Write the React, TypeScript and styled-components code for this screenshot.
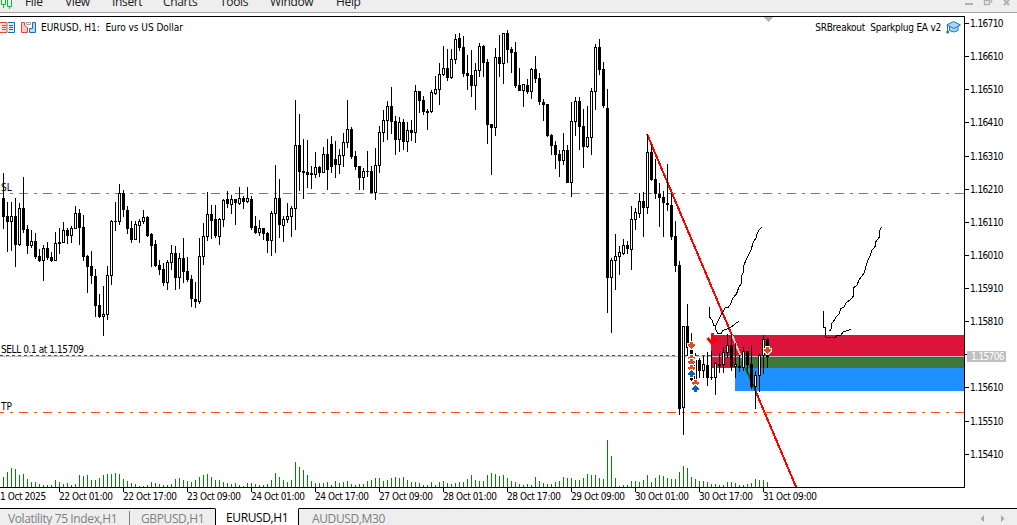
import React from "react";
import styled, { createGlobalStyle, css } from "styled-components";

// Chart geometry
const PLOT_TOP = 17;
const PLOT_WIDTH = 964;
const PLOT_HEIGHT = 470;
const BAR_STEP = 4;
const FIRST_BAR = 3;

// [high, body top, body bottom, low, bullish]
const candles = [
  [173, 198, 217, 229, 0], [202, 216, 222, 252, 0], [202, 216, 222, 251, 1], [198, 216, 245, 267, 0],
  [203, 208, 245, 246, 1], [177, 208, 230, 233, 0], [225, 229, 246, 254, 0], [230, 241, 246, 248, 1],
  [233, 241, 257, 259, 0], [249, 256, 261, 262, 0], [245, 248, 261, 281, 1], [242, 248, 258, 260, 0],
  [252, 257, 261, 262, 0], [232, 243, 261, 261, 1], [228, 242, 244, 254, 0], [222, 230, 243, 243, 1],
  [228, 230, 236, 244, 0], [226, 228, 236, 243, 1], [206, 213, 229, 229, 1], [209, 213, 228, 245, 0],
  [215, 227, 257, 261, 0], [255, 256, 267, 293, 0], [251, 266, 276, 284, 0], [269, 276, 306, 317, 0],
  [294, 305, 317, 318, 0], [286, 314, 317, 336, 1], [266, 275, 315, 320, 1], [220, 221, 276, 285, 1],
  [202, 221, 222, 231, 0], [184, 193, 222, 225, 1], [190, 193, 210, 217, 0], [206, 210, 229, 234, 0],
  [221, 228, 240, 243, 0], [221, 224, 240, 240, 1], [219, 221, 226, 243, 1], [210, 217, 222, 224, 1],
  [216, 217, 236, 237, 0], [233, 234, 246, 267, 0], [240, 244, 266, 267, 0], [260, 265, 270, 275, 0],
  [263, 269, 283, 286, 0], [260, 262, 283, 290, 1], [245, 253, 263, 270, 1], [246, 253, 278, 290, 0],
  [253, 258, 278, 289, 1], [238, 258, 272, 283, 0], [257, 271, 280, 282, 0], [275, 279, 299, 307, 0],
  [282, 299, 302, 308, 0], [238, 256, 302, 304, 1], [223, 236, 257, 265, 1], [192, 214, 237, 241, 1],
  [205, 214, 221, 239, 0], [205, 219, 236, 238, 0], [218, 219, 237, 245, 1], [199, 200, 220, 227, 1],
  [191, 199, 204, 208, 0], [195, 199, 205, 214, 1], [199, 199, 203, 225, 0], [187, 198, 204, 205, 1],
  [196, 198, 202, 209, 0], [187, 198, 202, 203, 1], [196, 199, 228, 230, 0], [216, 226, 233, 234, 0],
  [220, 228, 233, 236, 1], [228, 228, 234, 240, 0], [232, 233, 241, 253, 0], [211, 213, 241, 256, 1],
  [165, 198, 214, 253, 1], [179, 198, 225, 238, 0], [216, 219, 226, 242, 1], [203, 216, 220, 223, 1],
  [206, 208, 217, 237, 1], [100, 145, 209, 230, 1], [114, 145, 172, 191, 0], [139, 171, 173, 199, 0],
  [140, 172, 175, 188, 0], [166, 173, 175, 189, 0], [152, 167, 175, 178, 1], [166, 167, 173, 177, 0],
  [147, 154, 173, 173, 1], [139, 154, 170, 190, 0], [136, 144, 167, 173, 0], [141, 159, 165, 178, 0],
  [149, 155, 165, 174, 1], [133, 142, 156, 167, 1], [100, 129, 143, 148, 1], [127, 129, 157, 159, 0],
  [151, 156, 167, 170, 0], [166, 166, 178, 190, 0], [168, 171, 178, 190, 1], [151, 171, 172, 177, 0],
  [166, 171, 193, 193, 0], [148, 165, 193, 200, 1], [126, 132, 166, 173, 1], [110, 120, 133, 142, 1],
  [101, 106, 121, 140, 1], [87, 106, 122, 134, 0], [116, 121, 140, 155, 0], [117, 122, 140, 152, 1],
  [119, 122, 142, 150, 0], [122, 130, 142, 152, 1], [120, 130, 133, 141, 0], [85, 91, 133, 143, 1],
  [91, 91, 101, 113, 0], [96, 100, 112, 115, 0], [109, 111, 113, 130, 0], [90, 92, 112, 113, 1],
  [76, 89, 94, 95, 1], [63, 74, 90, 105, 1], [46, 68, 75, 76, 1], [49, 68, 78, 81, 0],
  [49, 59, 78, 79, 1], [34, 39, 60, 64, 1], [33, 38, 48, 51, 0], [36, 47, 74, 77, 0],
  [55, 73, 76, 90, 0], [50, 75, 86, 97, 0], [63, 70, 86, 110, 1], [43, 46, 71, 77, 1],
  [45, 46, 63, 77, 0], [59, 62, 125, 144, 0], [124, 124, 128, 175, 0], [48, 57, 128, 136, 1],
  [35, 57, 64, 77, 0], [33, 33, 64, 84, 1], [30, 33, 50, 63, 0], [47, 49, 53, 73, 0],
  [42, 52, 86, 88, 0], [68, 85, 91, 91, 0], [84, 84, 91, 107, 1], [79, 85, 92, 94, 0],
  [68, 69, 92, 99, 1], [56, 69, 79, 83, 0], [73, 78, 102, 105, 0], [99, 102, 105, 121, 0],
  [104, 104, 136, 137, 0], [134, 135, 146, 155, 0], [141, 145, 155, 169, 0], [150, 154, 161, 177, 0],
  [133, 150, 161, 165, 1], [145, 150, 183, 183, 0], [102, 121, 183, 197, 1], [97, 101, 122, 136, 1],
  [97, 101, 127, 150, 0], [109, 126, 147, 168, 0], [106, 137, 147, 148, 1], [88, 91, 138, 155, 1],
  [44, 47, 92, 110, 1], [39, 47, 70, 75, 0], [62, 69, 106, 108, 0], [89, 108, 278, 313, 0],
  [258, 260, 278, 333, 1], [234, 256, 261, 290, 1], [246, 252, 257, 275, 1], [239, 245, 254, 255, 1],
  [241, 245, 249, 254, 0], [206, 219, 250, 270, 1], [208, 212, 220, 230, 1], [193, 201, 214, 218, 1],
  [192, 201, 208, 237, 0], [134, 152, 208, 214, 1], [145, 152, 180, 181, 0], [159, 179, 194, 199, 0],
  [183, 194, 198, 227, 0], [191, 197, 203, 237, 0], [164, 203, 205, 211, 0], [193, 205, 237, 240, 0],
  [221, 236, 266, 272, 0], [261, 265, 409, 415, 0], [326, 326, 408, 435, 1], [304, 326, 348, 357, 0],
  [333, 346, 380, 382, 0], [353, 360, 380, 393, 1], [358, 360, 371, 378, 0], [356, 364, 371, 378, 1],
  [352, 365, 378, 386, 0], [351, 377, 378, 380, 0], [362, 363, 378, 395, 1], [353, 364, 366, 373, 0],
  [347, 352, 365, 373, 1], [334, 345, 353, 358, 1], [334, 345, 367, 371, 0], [343, 364, 367, 378, 1],
  [355, 366, 368, 372, 0], [347, 351, 368, 371, 1], [351, 351, 365, 374, 0], [346, 364, 387, 389, 0],
  [371, 375, 387, 409, 1], [353, 355, 376, 392, 1], [335, 339, 356, 374, 1], [338, 339, 357, 368, 0],
];

const volumes = [
  10, 15, 19, 18, 12, 13, 8, 5, 5, 3, 2, 2, 2, 7, 5, 3, 4, 2, 3, 12, 11, 12, 7, 7, 9, 12, 13, 13, 14, 13, 8, 6,
  4, 3, 1, 1, 2, 5, 4, 3, 2, 2, 3, 8, 9, 7, 6, 5, 7, 10, 12, 13, 10, 7, 7, 5, 4, 3, 4, 2, 1, 4, 4, 3,
  2, 2, 3, 7, 14, 10, 7, 5, 7, 25, 20, 17, 12, 6, 4, 4, 4, 5, 2, 6, 4, 5, 6, 3, 2, 3, 3, 6, 7, 9, 9, 6,
  7, 9, 10, 9, 10, 7, 5, 5, 4, 2, 2, 5, 2, 5, 6, 4, 3, 4, 5, 5, 8, 12, 7, 6, 6, 12, 14, 13, 11, 12, 9, 6,
  5, 3, 2, 3, 2, 10, 6, 4, 3, 3, 5, 6, 10, 9, 9, 7, 7, 9, 13, 12, 12, 9, 8, 47, 31, 9, 1, 2, 2, 6, 6, 5,
  7, 12, 5, 9, 12, 11, 9, 8, 8, 15, 21, 19, 10, 8, 6, 6, 5, 3, 3, 2, 2, 5, 5, 4, 2, 2, 3, 4, 8, 7, 7, 5,
];

const prices = [
  "1.16710", "1.16610", "1.16510", "1.16410", "1.16310", "1.16210", "1.16110",
  "1.16010", "1.15910", "1.15810", "", "1.15610", "1.15510", "1.15410",
];

const times = [
  "22 Oct 01:00", "22 Oct 17:00", "23 Oct 09:00", "24 Oct 01:00", "24 Oct 17:00", "27 Oct 09:00",
  "28 Oct 01:00", "28 Oct 17:00", "29 Oct 09:00", "30 Oct 01:00", "30 Oct 17:00", "31 Oct 09:00",
];

const menu = [
  { label: "File", width: 40 },
  { label: "View", width: 47 },
  { label: "Insert", width: 51 },
  { label: "Charts", width: 57 },
  { label: "Tools", width: 50 },
  { label: "Window", width: 66 },
  { label: "Help", width: 40 },
];

const trades = [
  { x: 691, y: 345, side: "sell" },
  { x: 691, y: 358, side: "sell" },
  { x: 691, y: 362, side: "sell" },
  { x: 691, y: 368, side: "sell" },
  { x: 691, y: 373, side: "buy" },
  { x: 695, y: 383, side: "sell" },
  { x: 695, y: 388, side: "buy" },
  { x: 767, y: 350, side: "sell" },
];

const GlobalStyle = createGlobalStyle`
  body {
    margin: 0;
    background: #fff;
    overflow: hidden;
  }
`;

const chartFont = css`
  font-family: "DejaVu Sans Condensed", "DejaVu Sans", sans-serif;
  font-size: 10px;
  color: #000;
  white-space: pre;
`;

const Terminal = styled.div`
  width: 1017px;
  height: 525px;
  display: flex;
  flex-direction: column;
  overflow: hidden;
  background: #fff;
`;

const MenuBar = styled.div`
  height: 12px;
  flex: none;
  display: flex;
  align-items: flex-end;
  justify-content: space-between;
  background: #eeeeee;
  border-bottom: 1px solid #a0a0a0;
  overflow: hidden;
`;

const MenuItems = styled.div`
  display: flex;
  align-items: flex-end;
  height: 12px;
`;

const MenuIcon = styled.svg`
  width: 25px;
  height: 12px;
`;

const MenuItem = styled.span<{ $width: number }>`
  width: ${(p) => p.$width}px;
  font: 12px/16px "Open Sans", "Noto Sans", sans-serif;
  letter-spacing: -0.35px;
  color: #1a1a1a;
  padding-bottom: 2px;
`;

const WindowControls = styled.svg`
  width: 53px;
  height: 12px;
`;

const ChartWindow = styled.div`
  display: flex;
  flex: none;
  height: 471px;
  margin-top: 3px;
`;

const PlotArea = styled.div`
  position: relative;
  width: 964px;
  flex: none;
  border-top: 1px solid #000;
  border-right: 1px solid #000;
`;

const Plot = styled.svg`
  display: block;

  text {
    ${chartFont}
  }
`;

const ChartHeader = styled.div`
  position: absolute;
  top: 3px;
  left: 0;
  right: 3px;
  height: 14px;
  display: flex;
  align-items: center;
  ${chartFont}
`;

const HeaderIcon = styled.svg<{ $gap: number }>`
  width: 15px;
  height: 14px;
  margin-right: ${(p) => p.$gap}px;
`;

const Title = styled.span`
  letter-spacing: -0.02px;
`;

const ExpertName = styled.span`
  margin-left: auto;
  margin-right: 5px;
  letter-spacing: -0.23px;
`;

const PriceAxis = styled.div`
  position: relative;
  flex: 1;
  display: flex;
  flex-direction: column;
`;

const PriceTick = styled.div`
  height: 33.13px;
  flex: none;
  display: flex;
  align-items: flex-start;
  ${chartFont}
  line-height: 15px;
  letter-spacing: -0.6px;

  &::before {
    content: "";
    width: 4px;
    height: 1px;
    margin: 7px 1px 0 0;
    background: #000;
  }
`;

const CurrentPrice = styled.div`
  position: absolute;
  left: 2px;
  top: 335px;
  width: 35px;
  height: 11px;
  padding-left: 4px;
  background: #c0c0c0;
  ${chartFont}
  color: #fff;
  line-height: 11px;
  letter-spacing: -0.6px;
`;

const TimeAxis = styled.div`
  flex: none;
  height: 20px;
  display: flex;
  width: 965px;
  border-top: 1px solid #000;
`;

const TimeTick = styled.div<{ $first?: boolean }>`
  width: ${(p) => (p.$first ? 59 : 64)}px;
  flex: none;
  ${chartFont}
  line-height: 10px;
  letter-spacing: ${(p) => (p.$first ? -0.42 : -0.42)}px;

  &::before {
    content: "";
    display: block;
    width: 1px;
    height: 4px;
    background: ${(p) => (p.$first ? "transparent" : "#000")};
  }
`;

const TabBar = styled.div`
  flex: 1;
  display: flex;
  background: #eeeeee;
`;

const Tab = styled.div<{ $width: number; $active?: boolean; $divider?: boolean }>`
  width: ${(p) => p.$width}px;
  flex: none;
  box-sizing: border-box;
  overflow: hidden;
  white-space: nowrap;
  font: 12px/19px "Open Sans", "Noto Sans", sans-serif;
  letter-spacing: -0.38px;
  color: #808080;
  border-top: 1px solid #000;
  padding-left: ${(p) => (p.$width === 85 ? 11 : 13)}px;

  ${(p) =>
    p.$divider &&
    css`
      padding-left: 8px;
      background: linear-gradient(#808080, #808080) right 2px / 1px 14px no-repeat;
    `}

  ${(p) =>
    p.$active &&
    css`
      color: #000;
      background: #fff;
      border-top-color: #fff;
      border-left: 1px solid #000;
      border-right: 1px solid #000;
      padding-left: 10px;
      line-height: 17px;
    `}
`;

const TabFill = styled.div`
  flex: 1;
  display: flex;
  justify-content: flex-end;
  border-top: 1px solid #000;
`;

function Candle({ index, data }: { index: number; data: number[] }) {
  const x = FIRST_BAR + index * BAR_STEP;
  const [high, top, bottom, low, up] = data;
  return (
    <g>
      <rect x={x} y={high} width={1} height={low - high} />
      <rect x={x - 1} y={top} width={3} height={bottom - top} />
      {up === 1 && <rect x={x} y={top + 1} width={1} height={Math.max(bottom - top - 2, 0)} fill="#fff" />}
    </g>
  );
}

function TradeMark({ x, y, side }: { x: number; y: number; side: string }) {
  const flip = side === "buy" ? -1 : 1;
  return (
    <path
      transform={`translate(${x + 0.5} ${y + 0.5}) scale(1 ${flip})`}
      d="M-1.5 -3.5H1.5V-1.5H3.5V0.5H2.5V1.5H1.5V2.5H0.5V3.5H-0.5V2.5H-1.5V1.5H-2.5V0.5H-3.5V-1.5H-1.5Z"
      fill={side === "buy" ? "#0a62b0" : "#e84a1c"}
      stroke="#fff"
      strokeWidth={1.6}
      paintOrder="stroke"
    />
  );
}

function PriceChart() {
  return (
    <Plot
      width={PLOT_WIDTH}
      height={PLOT_HEIGHT}
      viewBox={`0 ${PLOT_TOP} ${PLOT_WIDTH} ${PLOT_HEIGHT}`}
      shapeRendering="crispEdges"
    >
      {/* Supply and demand zones */}
      <rect x={711} y={335} width={253} height={33} fill="#dc143c" />
      <rect x={735} y={358} width={229} height={33} fill="#1e90ff" />
      <rect x={735} y={358} width={229} height={10} fill="#3c783c" />

      {/* Trend line */}
      <g strokeWidth={2} fill="none">
        <path d="M647 134L796.5 488" stroke="#ff0000" />
        <path d="M732 335L741.5 358" stroke="#dccfae" />
        <path d="M741.5 358L745.5 368" stroke="#2c86d8" />
        <path d="M745.5 368L755.5 391" stroke="#0f6b14" />
      </g>

      {/* Stop loss, take profit and entry */}
      <g fill="none" stroke="#ff4f14" strokeDasharray="9 6 3 6">
        <path d="M-5 193.5H964" />
        <path d="M-5 412.5H964" />
      </g>
      <path d="M0 356.5H964" stroke="#c0c0c0" />
      <path d="M0 355.5H964" stroke="#108010" strokeDasharray="3 3" />

      {volumes.map((v, i) => (
        <rect key={i} x={FIRST_BAR + i * BAR_STEP} y={487 - v} width={1} height={v} fill="#008a00" />
      ))}
      {candles.map((c, i) => (
        <Candle key={i} index={i} data={c} />
      ))}

      {/* Freehand arrows */}
      <g fill="none" stroke="#000">
        <path d="M761.5 227.5L759 230L757 234L756 238L753 243L751 250L749 254L746 260L744 265L743 273L741.5 276V283L738.5 288L736.5 294L733 298L730.5 304L728 307.5H725.5L723 312L720 317L718 321L715.5 326" />
        <path d="M709.5 307V317L712 320L713.5 325H715.5V329L718 333.5H721.5L722.5 330.5L727 329L730 327.5L734 325L736 323L739.5 321.5" />
        <path d="M881.5 227.5L879.5 231V237L875.5 242V246L872 250L870.5 255L868 260L866 266L864.5 272L862 276L859 280L857 285L853.5 288V296L851 299L846 303L844 307L840.5 309L839 314L836 317L834.5 320L831.5 324V328L829.5 331.5" />
        <path d="M823.5 311V327.5H825.5V337.5H835.5L836.5 335.5H840.5L843 332L847 330.5L851.5 329.5" />
      </g>
      <g>
        <path
          d="M712.5 333V344M707.5 338L712.5 344L717.5 338"
          fill="none"
          stroke="#ff0000"
          strokeWidth={2.8}
          shapeRendering="geometricPrecision"
        />
        {trades.map((t) => (
          <TradeMark key={`${t.x}-${t.y}`} {...t} />
        ))}
        <path d="M763 17H773L768 22Z" fill="#b4b4b4" />
      </g>

      <text x={1} y={191}>SL</text>
      <text x={1} y={353} textLength={83}>SELL 0.1 at 1.15709</text>
      <text x={1} y={410}>TP</text>
    </Plot>
  );
}

export default function App() {
  return (
    <>
      <GlobalStyle />
      <Terminal>
        <MenuBar>
          <MenuItems>
            <MenuIcon viewBox="0 0 25 12">
              <path d="M1.5 0V4.5H5.5V0M3.5 4.5V8M7.5 0V6.5H11.5V0M9.5 6.5V9" fill="#e4fbe8" stroke="#1eb43c" />
            </MenuIcon>
            {menu.map((m) => (
              <MenuItem key={m.label} $width={m.width}>
                {m.label}
              </MenuItem>
            ))}
          </MenuItems>
          <WindowControls viewBox="0 0 53 12" fill="none" stroke="#b0b0b0">
            <path d="M1 4H9M40 0L45 5M45 0L40 5" strokeWidth={2} />
            <path d="M20.5 0.5H25.5V4.5H20.5ZM23 -1H27.5V3" strokeWidth={1.4} />
          </WindowControls>
        </MenuBar>

        <ChartWindow>
          <PlotArea>
            <PriceChart />
            <ChartHeader>
              <HeaderIcon $gap={6} viewBox="0 0 15 14">
                <path d="M0 2.5H7V12.5H0" fill="#fde3df" stroke="#e0483e" />
                <path d="M8 2.5H14.5V12.5H8" fill="#d9edfb" stroke="#1a70b4" />
                <path d="M2 5.5H6M2 7.5H6M2 9.5H6" stroke="#e0483e" />
                <path d="M9 5.5H13M9 7.5H13M9 9.5H13" stroke="#1a70b4" />
              </HeaderIcon>
              <HeaderIcon $gap={5} viewBox="0 0 15 14">
                <path d="M0.5 2.5H3.5V5.5L6.5 7.5V12.5H0.5Z" fill="#fbc9c2" stroke="#e0483e" />
                <path d="M11.5 2.5H14.5V12.5H8.5V8.5H11.5Z" fill="#b9dcf6" stroke="#1a70b4" />
                <path d="M5.5 2.5H9.5V4.5H5.5Z" fill="#fff" stroke="#a0a0a0" />
              </HeaderIcon>
              <Title>EURUSD, H1:  Euro vs US Dollar</Title>
              <ExpertName>SRBreakout  Sparkplug EA v2</ExpertName>
              <HeaderIcon $gap={0} viewBox="0 0 15 14">
                <path d="M3.5 6V10.5Q8 13.5 12 10.5V6" fill="#a8d6f5" stroke="#1f78bd" />
                <path d="M0.8 5L7.5 1.5L14.5 5L8 8.5Z" fill="#a8d6f5" stroke="#1f78bd" />
                <path d="M1.5 5.5V12" stroke="#1f78bd" />
                <circle cx="1.7" cy="12" r="1.5" fill="#1f78bd" />
              </HeaderIcon>
            </ChartHeader>
          </PlotArea>
          <PriceAxis>
            {prices.map((p, i) => (
              <PriceTick key={i}>{p}</PriceTick>
            ))}
            <CurrentPrice>1.15706</CurrentPrice>
          </PriceAxis>
        </ChartWindow>

        <TimeAxis>
          <TimeTick $first>1 Oct 2025</TimeTick>
          {times.map((t) => (
            <TimeTick key={t}>{t}</TimeTick>
          ))}
        </TimeAxis>

        <TabBar>
          <Tab $width={130} $divider>Volatility 75 Index,H1</Tab>
          <Tab $width={85}>GBPUSD,H1</Tab>
          <Tab $width={84} $active>EURUSD,H1</Tab>
          <Tab $width={100}>AUDUSD,M30</Tab>
          <TabFill>
            <svg width="38" height="16" viewBox="0 0 38 16" fill="#a8a8a8">
              <path d="M5 6V13L1.5 9.5ZM22 6V13L25.5 9.5Z" />
            </svg>
          </TabFill>
        </TabBar>
      </Terminal>
    </>
  );
}
